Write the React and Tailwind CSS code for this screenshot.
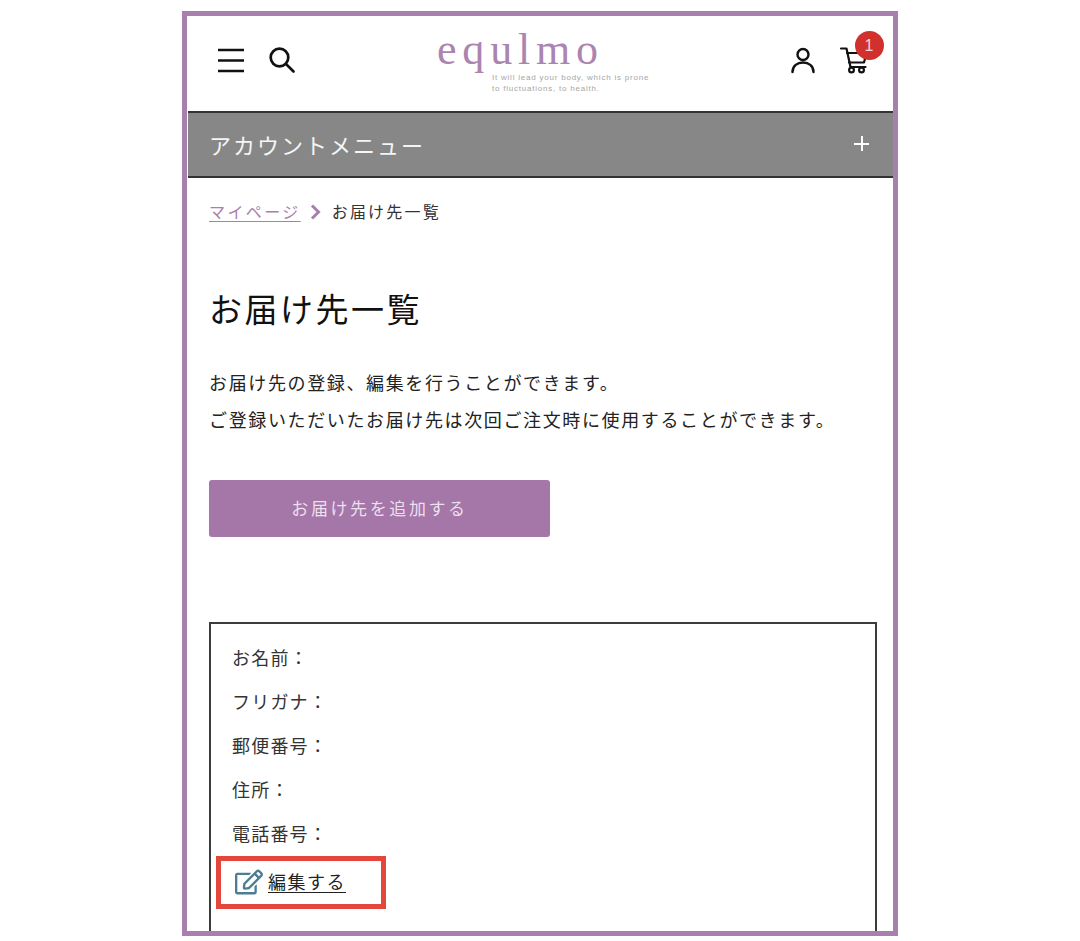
import React from "react";
import { FaRegEdit } from "react-icons/fa";

const Row = ({ children }) => (
  <div className="h-[44px] flex items-center text-[18px] tracking-[1.2px] text-[#333]">{children}</div>
);

export default function App() {
  return (
    <div className="w-[1080px] h-[941px] overflow-hidden bg-white pt-[11px] pl-[182px] font-['Noto_Sans_CJK_JP','Noto_Sans',sans-serif]">
      <div className="w-[716px] h-[925px] border-[5px] border-[#a87fad] overflow-hidden bg-white">
        <header className="h-[95px] flex items-center relative">
          <div className="pl-[30px] flex items-center gap-[23px] -mt-[8px]">
            <svg width="28" height="26" viewBox="0 0 28 26" fill="none" stroke="#111" strokeWidth="2.6">
              <path d="M1 3h26M1 13.500h26M1 24h26" />
            </svg>
            <svg width="28" height="28" viewBox="0 0 28 28" fill="none" stroke="#111" strokeWidth="2.7" strokeLinecap="round">
              <circle cx="11.500" cy="11.500" r="8.800" />
              <path d="M18 18l7.500 7.500" />
            </svg>
          </div>
          <div className="ml-[141px] w-[220px] text-[#ab84b0] -mt-[1px]">
            <div className="font-['Liberation_Serif',serif] text-[44px] leading-[36px] tracking-[5.8px]">equlmo</div>
            <div className="mt-[4px] pl-[55px] font-['Liberation_Sans',sans-serif] text-[8px] leading-[11px] tracking-[0.78px] text-[#a6a6a6] whitespace-nowrap">
              It will lead your body, which is prone<br />to fluctuations, to health.
            </div>
          </div>
          <div className="ml-auto mr-[6px] flex items-center gap-[22px] -mt-[7px]">
            <svg width="28" height="28" viewBox="0 0 28 28" fill="none" stroke="#111" strokeWidth="2.400" strokeLinecap="round">
              <circle cx="14" cy="8.500" r="5.500" />
              <path d="M3.500 26c0-6.500 5-9.500 10.500-9.500S24.500 19.500 24.500 26" />
            </svg>
            <div className="relative w-[48px] h-[28px]">
              <svg width="30" height="28" viewBox="0 0 30 28" fill="none" stroke="#111" strokeWidth="2.200" strokeLinecap="round" strokeLinejoin="round">
                <path d="M2 2.500h5.500l4 18.500h15" />
                <path d="M8 7h19.500l-2.500 9.500H10" />
                <circle cx="12.500" cy="24" r="2.400" />
                <circle cx="22.500" cy="24" r="2.400" />
              </svg>
              <div className="absolute left-[15.500px] -top-[15px] w-[29px] h-[29px] rounded-full bg-[#d1312d] text-[#f4d5d3] text-[16px] flex items-center justify-center font-['Liberation_Sans',sans-serif]">1</div>
            </div>
          </div>
        </header>
        <div className="h-[67px] ml-[1px] bg-[#878787] border-y-2 border-[#333] flex items-center justify-between pl-[21px] pr-[24px] text-white">
          <span className="text-[22px] tracking-[2px] text-[#f5f5f5]">アカウントメニュー</span>
          <span className="w-[15px] h-[15px] relative -mt-[2px]">
            <span className="absolute left-0 right-0 top-[6.500px] h-[2px] bg-white" />
            <span className="absolute top-0 bottom-0 left-[6.500px] w-[2px] bg-white" />
          </span>
        </div>
        <main className="pl-[22px] pr-[16px]">
          <nav className="h-[34px] mt-[16px] flex items-center text-[16px] tracking-[2.4px]">
            <span className="text-[#a97fae] underline underline-offset-[3px]">マイページ</span>
            <svg className="ml-[9px] mr-[11px] mt-[1px]" width="11" height="16" viewBox="0 0 11 16" fill="none" stroke="#a97fae" strokeWidth="3">
              <path d="M2 1.500l6.500 6.500-6.500 6.500" />
            </svg>
            <span className="text-[#333] tracking-[2.2px]">お届け先一覧</span>
          </nav>
          <h1 className="mt-[55px] text-[33px] leading-[50px] tracking-[2.5px] text-[#111]">お届け先一覧</h1>
          <p className="mt-[31px] text-[18px] leading-[37px] tracking-[1.63px] text-[#222] whitespace-nowrap">
            お届け先の登録、編集を行うことができます。<br />ご登録いただいたお届け先は次回ご注文時に使用することができます。
          </p>
          <button className="mt-[42px] w-[341px] h-[57px] rounded-[3px] bg-[#a477a8] text-[#ecdfee] text-[17px] tracking-[2.600px] flex items-center justify-center pb-[2px]">
            お届け先を追加する
          </button>
          <section className="mt-[85px] w-[668px] h-[340px] border-2 border-[#3c3c3c] pl-[21px] pt-[11px]">
            <Row>お名前：</Row>
            <Row>フリガナ：</Row>
            <Row>郵便番号：</Row>
            <Row>住所：</Row>
            <Row>電話番号：</Row>
            <div className="-ml-[16px] mt-[1px] w-[170px] h-[53px] border-[5px] border-[#e5463c] flex items-center pl-[14px]">
              <FaRegEdit className="text-[#4c7d93] text-[28px] shrink-0 -mt-[1px]" />
              <span className="ml-[5px] -mt-[2px] text-[18px] tracking-[1.500px] underline underline-offset-[3px] text-[#222]">編集する</span>
            </div>
          </section>
        </main>
      </div>
    </div>
  );
}
